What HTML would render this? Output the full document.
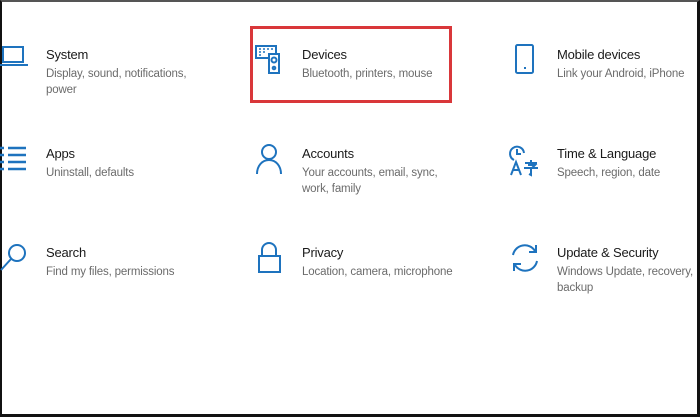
<!DOCTYPE html>
<html><head><meta charset="utf-8"><style>
*{margin:0;padding:0;box-sizing:border-box}
body{width:700px;height:417px;background:#fff;position:relative;overflow:hidden;font-family:"Segoe UI","Liberation Sans",sans-serif}
.frame{position:absolute;left:0;top:0;width:700px;height:417px;border-left:2px solid #111;border-top:2px solid #555;border-right:3px solid #111;border-bottom:3px solid #111}
.t{position:absolute;font-size:13px;color:#1a1a1a;letter-spacing:-0.2px}
.s{position:absolute;font-size:11.5px;color:#6b6b6b;line-height:16px;letter-spacing:-0.15px}
svg{position:absolute;fill:none;stroke:#1e73be;stroke-width:2}
.red{position:absolute;left:250px;top:26px;width:202px;height:77px;border:3px solid #d9373a}
</style></head><body>
<div class="frame"></div>

<svg style="left:0;top:44px" width="30" height="28" viewBox="0 0 30 28"><path d="M3 3h20v15H3zM0 21h28"/></svg>
<div class="t" style="left:46px;top:47px">System</div>
<div class="s" style="left:46px;top:66px">Display, sound, notifications,<br>power</div>

<svg style="left:0;top:145px" width="30" height="26" viewBox="0 0 30 26"><path d="M0 3h4M8 3h18M0 10h4M8 10h18M0 17h4M8 17h18M0 24h4M8 24h18" stroke-width="2.4"/></svg>
<div class="t" style="left:46px;top:146px">Apps</div>
<div class="s" style="left:46px;top:165px">Uninstall, defaults</div>

<svg style="left:0;top:242px" width="30" height="30" viewBox="0 0 30 30"><circle cx="17" cy="11" r="8"/><path d="M11 17L1 28"/></svg>
<div class="t" style="left:46px;top:245px">Search</div>
<div class="s" style="left:46px;top:264px">Find my files, permissions</div>

<div class="red"></div>
<svg style="left:255px;top:45px" width="30" height="30" viewBox="0 0 30 30" stroke-width="1.6"><path d="M1 1h20v12H1z"/><path d="M4 4h2M8 4h2M12 4h2M16 4h2M4 7h2M8 7h2M4 10h2" stroke-width="1.4"/><path d="M14 9h10v19H14z" fill="#fff"/><circle cx="19" cy="15" r="2.5"/><circle cx="19" cy="23" r="1.3"/></svg>
<div class="t" style="left:302px;top:47px">Devices</div>
<div class="s" style="left:302px;top:66px">Bluetooth, printers, mouse</div>

<svg style="left:255px;top:143px" width="30" height="32" viewBox="0 0 30 32"><circle cx="14" cy="9" r="7"/><path d="M2 31c0-8 5-14 12-14s12 6 12 14"/></svg>
<div class="t" style="left:302px;top:146px">Accounts</div>
<div class="s" style="left:302px;top:165px">Your accounts, email, sync,<br>work, family</div>

<svg style="left:257px;top:242px" width="26" height="32" viewBox="0 0 26 32"><path d="M5 14V8a7 7 0 0 1 14 0v6"/><path d="M2 14h21v16H2z"/></svg>
<div class="t" style="left:302px;top:245px">Privacy</div>
<div class="s" style="left:302px;top:264px">Location, camera, microphone</div>

<svg style="left:514px;top:44px" width="22" height="32" viewBox="0 0 22 32"><rect x="2" y="1" width="17" height="28" rx="1.5"/><path d="M10 24h2"/></svg>
<div class="t" style="left:557px;top:47px">Mobile devices</div>
<div class="s" style="left:557px;top:66px">Link your Android, iPhone</div>

<svg style="left:508px;top:143px" width="36" height="34" viewBox="0 0 36 34" stroke-width="1.8"><path d="M6 17a7 7 0 1 1 10-7"/><path d="M9 6v5h4"/><path d="M3 32l5-13 5 13M5 27h6"/><path d="M17 20h12M23 17v3M16 25h14M23 25v7l-2-1M20 22h7l-3 3"/></svg>
<div class="t" style="left:557px;top:146px">Time &amp; Language</div>
<div class="s" style="left:557px;top:165px">Speech, region, date</div>

<svg style="left:509px;top:242px" width="32" height="32" viewBox="0 0 32 32"><path d="M4 13A12 12 0 0 1 26 9"/><path d="M27 3v7h-7"/><path d="M28 19A12 12 0 0 1 6 23"/><path d="M5 29v-7h7"/></svg>
<div class="t" style="left:557px;top:245px">Update &amp; Security</div>
<div class="s" style="left:557px;top:264px">Windows Update, recovery,<br>backup</div>
</body></html>
